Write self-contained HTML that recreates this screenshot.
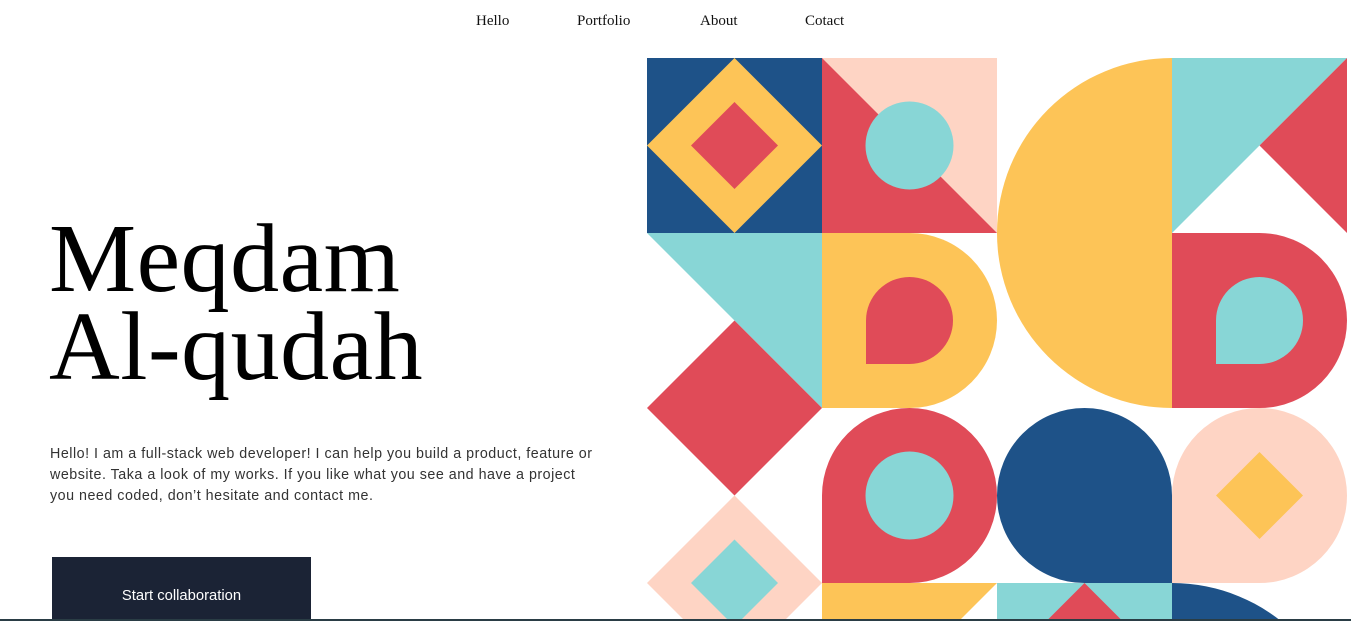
<!DOCTYPE html>
<html><head><meta charset="utf-8"><style>
html,body{margin:0;padding:0;background:#fff;width:1351px;height:621px;overflow:hidden;position:relative}
.nav{position:absolute;top:13px;font-family:"Liberation Serif",serif;font-size:15px;color:#111}
h1{position:absolute;left:49px;top:215px;margin:0;font-family:"Liberation Serif",serif;font-weight:400;font-size:98px;line-height:88px;color:#000;letter-spacing:0.5px}
p{position:absolute;left:50px;top:444px;width:548px;margin:0;font-family:"Liberation Sans",sans-serif;font-size:14.3px;line-height:21px;color:#333;letter-spacing:0.5px}
.btn{position:absolute;left:52px;top:557px;width:259px;height:64px;background:#1b2335;color:#fff;font-family:"Liberation Sans",sans-serif;font-size:14.8px;text-align:center;line-height:78px;overflow:hidden}
svg{position:absolute;left:0;top:0}
.bl{position:absolute;left:0;top:619px;width:1351px;height:2px;background:#2a3d45}
</style></head><body>
<div class="nav" style="left:476px">Hello</div>
<div class="nav" style="left:577px">Portfolio</div>
<div class="nav" style="left:700px">About</div>
<div class="nav" style="left:805px">Cotact</div>
<h1>Meqdam<br>Al-qudah</h1>
<p>Hello! I am a full-stack web developer! I can help you build a product, feature or website. Taka a look of my works. If you like what you see and have a project you need coded, don’t hesitate and contact me.</p>
<svg width="1351" height="621" viewBox="0 0 1351 621">
<rect x="647" y="58" width="175" height="175" fill="#1e5288"/>
<polygon points="734.5,58 822,145.5 734.5,233 647,145.5" fill="#fdc457"/>
<polygon points="734.5,102 778,145.5 734.5,189 691,145.5" fill="#e04b58"/>
<rect x="822" y="58" width="175" height="175" fill="#fed4c4"/>
<polygon points="822,58 822,233 997,233" fill="#e04b58"/>
<ellipse cx="909.5" cy="145.5" rx="44" ry="44" fill="#88d6d6"/>
<path d="M1172,58 A175,175 0 0 0 1172,408 Z" fill="#fdc457"/>
<polygon points="1172,58 1347,58 1172,233" fill="#88d6d6"/>
<polygon points="1347,58 1259.5,145.5 1347,233" fill="#e04b58"/>
<polygon points="647,233 822,233 822,408" fill="#88d6d6"/>
<polygon points="734.5,320.5 822,408 734.5,495.5 647,408" fill="#e04b58"/>
<path d="M822,233 H909.5 A87.5,87.5 0 0 1 909.5,408 H822 Z" fill="#fdc457"/>
<path d="M866,320.5 A43.5,43.5 0 1 1 909.5,364 H866 Z" fill="#e04b58"/>
<path d="M1172,233 H1259.5 A87.5,87.5 0 0 1 1259.5,408 H1172 Z" fill="#e04b58"/>
<path d="M1216,320.5 A43.5,43.5 0 1 1 1259.5,364 H1216 Z" fill="#88d6d6"/>
<path d="M822,583 V495.5 A87.5,87.5 0 0 1 997,495.5 A87.5,87.5 0 0 1 909.5,583 Z" fill="#e04b58"/>
<circle cx="909.5" cy="495.5" r="44" fill="#88d6d6"/>
<path d="M997,495.5 A87.5,87.5 0 0 1 1172,495.5 V583 H1084.5 A87.5,87.5 0 0 1 997,495.5 Z" fill="#1e5288"/>
<path d="M1172,583 V495.5 A87.5,87.5 0 0 1 1347,495.5 A87.5,87.5 0 0 1 1259.5,583 Z" fill="#fed4c4"/>
<polygon points="1259.5,452 1303,495.5 1259.5,539 1216,495.5" fill="#fdc457"/>
<polygon points="734.5,495.5 822,583 734.5,670.5 647,583" fill="#fed4c4"/>
<polygon points="734.5,539.5 778,583 734.5,626.5 691,583" fill="#88d6d6"/>
<polygon points="822,583 997,583 822,758" fill="#fdc457"/>
<rect x="997" y="583" width="175" height="175" fill="#88d6d6"/>
<polygon points="1084.5,583 1172,670.5 997,670.5" fill="#e04b58"/>
<path d="M1172,583 A175,175 0 0 1 1347,758 H1172 Z" fill="#1e5288"/>
</svg>
<div class="btn">Start collaboration</div>
<div class="bl"></div>
</body></html>
